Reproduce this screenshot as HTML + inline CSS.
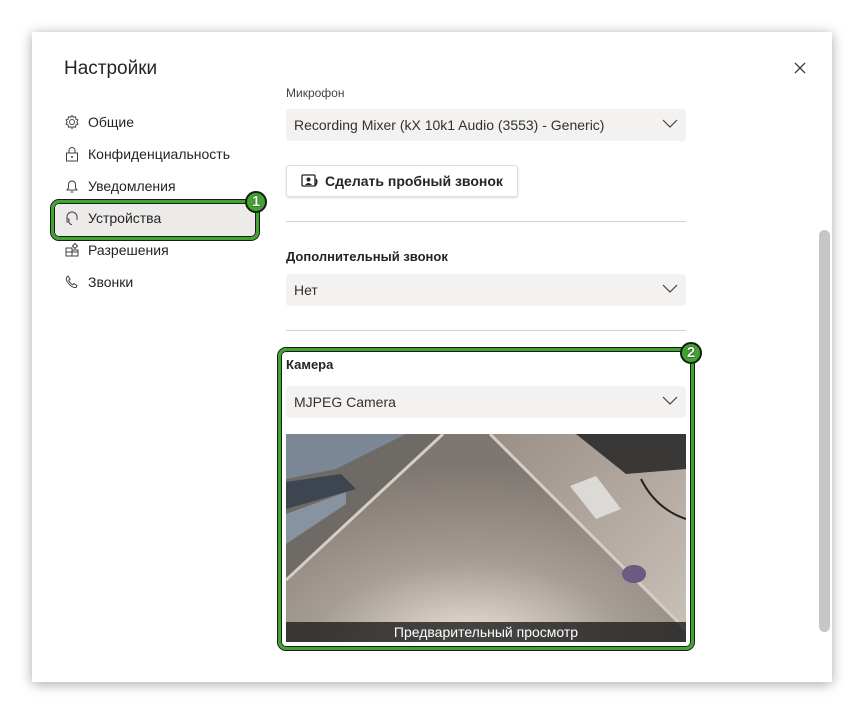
<!DOCTYPE html>
<html><head><meta charset="utf-8"><style>
*{box-sizing:border-box;margin:0;padding:0}
body{width:864px;height:714px;background:#fff;font-family:"Liberation Sans","DejaVu Sans",sans-serif;position:relative;overflow:hidden;color:#242424}
.dlg{position:absolute;left:32px;top:32px;width:800px;height:650px;background:#fff;box-shadow:0 2px 12px rgba(0,0,0,.35)}
.abs{position:absolute}
.title{left:64px;top:58px;font-size:19px;font-weight:normal;color:#242424}
.nav{left:64px;font-size:14px;color:#242424;display:flex;align-items:center}
.nav svg{width:16px;height:16px;margin-right:8px}
.sel{position:absolute;left:286px;width:400px;height:32px;background:#f3f2f1;border-radius:3px;font-size:14px;padding:0 8px;line-height:32px;color:#323130}
.sel svg{position:absolute;right:8px;top:10px}
.lbl{font-size:13px;font-weight:bold;color:#242424}
.hr{position:absolute;left:286px;width:400px;height:1px;background:#d1d1d1}
.green{position:absolute;border:3px solid #3ea62c;outline:1px solid #1a1a1a;box-shadow:0 0 0 1px #1a1a1a inset;border-radius:8px}
.badge{position:absolute;width:22px;height:22px;border-radius:50%;background:#3ea62c;border:2px solid #1a1a1a;color:#fff;font-weight:bold;font-size:15px;text-align:center;line-height:18px;text-shadow:0 0 1px #000,0 0 1px #000}
</style></head><body>
<div class="dlg"></div>
<div class="abs title">Настройки</div>
<svg class="abs" style="left:794px;top:62px" width="12" height="12"><path d="M1 1L11 11M11 1L1 11" stroke="#424242" stroke-width="1.3"/></svg>

<div class="abs" style="left:55px;top:204px;width:202px;height:33px;background:#edebe9;border-radius:6px"></div>
<div class="green" style="left:51px;top:200px;width:208px;height:40px"></div>
<div class="badge" style="left:245px;top:191px">1</div>

<div class="abs nav" style="top:114px"><svg viewBox="0 0 16 16"><circle cx="8" cy="8" r="2.5" fill="none" stroke="#424242"/><path d="M8 1.5l1.3 1.8 2.2-.5.4 2.2 2 1-1 2 1 2-2 1-.4 2.2-2.2-.5L8 14.5l-1.3-1.8-2.2.5-.4-2.2-2-1 1-2-1-2 2-1 .4-2.2 2.2.5z" fill="none" stroke="#424242"/></svg>Общие</div>
<div class="abs nav" style="top:146px"><svg viewBox="0 0 16 16"><rect x="2.5" y="7" width="11" height="8" fill="none" stroke="#424242"/><path d="M5 7V4.5a3 3 0 016 0V7" fill="none" stroke="#424242"/><circle cx="8" cy="11" r="1" fill="#424242"/></svg>Конфиденциальность</div>
<div class="abs nav" style="top:178px"><svg viewBox="0 0 16 16"><path d="M3 12h10l-1.5-2V6.5a3.5 3.5 0 00-7 0V10z" fill="none" stroke="#424242"/><path d="M6.5 14h3" stroke="#424242"/></svg>Уведомления</div>
<div class="abs nav" style="top:210px"><svg viewBox="0 0 16 16"><path d="M3 10V7a5 5 0 0110 0v3" fill="none" stroke="#424242"/><rect x="3" y="9" width="2" height="3" fill="none" stroke="#424242"/><path d="M5 12.5q1 2 3 2" fill="none" stroke="#424242"/></svg>Устройства</div>
<div class="abs nav" style="top:242px"><svg viewBox="0 0 16 16"><path d="M2 6h6v8H2zM8 8h6v6H8zM2 10h12M8 6v8" fill="none" stroke="#424242"/><path d="M11 1.5l2.5 2.5-2.5 2.5-2.5-2.5z" fill="none" stroke="#424242"/></svg>Разрешения</div>
<div class="abs nav" style="top:274px"><svg viewBox="0 0 16 16"><path d="M4 2l2 3-1.3 1.3q1.3 3 4 4.5L10 9.5l3 2-1 2q-4 .5-7.5-4T3 3z" fill="none" stroke="#424242"/></svg>Звонки</div>

<div class="abs" style="left:286px;top:86px;font-size:12px;color:#424242">Микрофон</div>
<div class="sel" style="top:109px">Recording Mixer (kX 10k1 Audio (3553) - Generic)<svg width="16" height="10"><path d="M1 1l7 7 7-7" fill="none" stroke="#424242" stroke-width="1.2"/></svg></div>
<div class="abs" style="left:286px;top:165px;width:232px;height:32px;border:1px solid #e1dfdd;border-radius:3px;box-shadow:0 1px 2px rgba(0,0,0,.15);font-size:14px;font-weight:bold;color:#242424;display:flex;align-items:center;justify-content:center"><svg width="18" height="14" style="margin-right:6px"><rect x="1" y="1" width="13" height="11" rx="1" fill="none" stroke="#242424" stroke-width="1.3"/><circle cx="7.5" cy="5.5" r="2" fill="#242424"/><path d="M4 11q3.5-4 7 0" fill="#242424"/><path d="M15 5q2 3-1 7" fill="none" stroke="#242424" stroke-width="1.5"/></svg>Сделать пробный звонок</div>
<div class="hr" style="top:221px"></div>
<div class="abs lbl" style="left:286px;top:249px">Дополнительный звонок</div>
<div class="sel" style="top:274px">Нет<svg width="16" height="10"><path d="M1 1l7 7 7-7" fill="none" stroke="#424242" stroke-width="1.2"/></svg></div>
<div class="hr" style="top:330px"></div>

<div class="abs lbl" style="left:286px;top:357px">Камера</div>
<div class="sel" style="top:386px">MJPEG Camera<svg width="16" height="10"><path d="M1 1l7 7 7-7" fill="none" stroke="#424242" stroke-width="1.2"/></svg></div>
<svg class="abs" style="left:286px;top:434px" width="400" height="208" viewBox="0 0 400 208">
<defs><radialGradient id="g" cx="0.46" cy="1" r="0.85"><stop offset="0" stop-color="#ece2d8"/><stop offset="0.45" stop-color="#a69d95"/><stop offset="1" stop-color="#7e7670"/></radialGradient>
<linearGradient id="w" x1="0" y1="0" x2="1" y2="1"><stop offset="0" stop-color="#9a8f86"/><stop offset="1" stop-color="#c9c0b8"/></linearGradient></defs>
<rect width="400" height="208" fill="#8a837e"/>
<polygon points="157,0 204,0 400,196 400,208 0,208 0,146" fill="url(#g)"/>
<polygon points="0,0 157,0 0,146" fill="#6e6a66"/>
<polygon points="0,0 120,0 50,35 0,45" fill="#7b8794"/>
<polygon points="0,48 55,40 70,55 0,75" fill="#3d4550"/>
<polygon points="0,80 60,58 60,70 0,110" fill="#8793a0"/>
<polygon points="204,0 400,0 400,196" fill="url(#w)"/>
<polygon points="290,0 400,0 400,35 340,40" fill="#3a3836"/>
<polygon points="284,52 310,42 335,75 310,85" fill="#dcdad6"/>
<path d="M400 85q-30-10-45-40" stroke="#222" stroke-width="2" fill="none"/>
<path d="M157 0L0 146M204 0L400 196" stroke="#d6cdc4" stroke-width="3"/>
<ellipse cx="348" cy="140" rx="12" ry="9" fill="#6c5a80"/>
<rect y="188" width="400" height="20" fill="rgba(30,30,30,.8)"/>
<text x="200" y="203" text-anchor="middle" fill="#fff" font-size="14" font-family="Liberation Sans, sans-serif">Предварительный просмотр</text>
</svg>
<div class="green" style="left:278px;top:348px;width:416px;height:302px"></div>
<div class="badge" style="left:680px;top:342px">2</div>

<div class="abs" style="left:819px;top:230px;width:11px;height:402px;background:#c8c6c4;border-radius:6px"></div>
</body></html>
